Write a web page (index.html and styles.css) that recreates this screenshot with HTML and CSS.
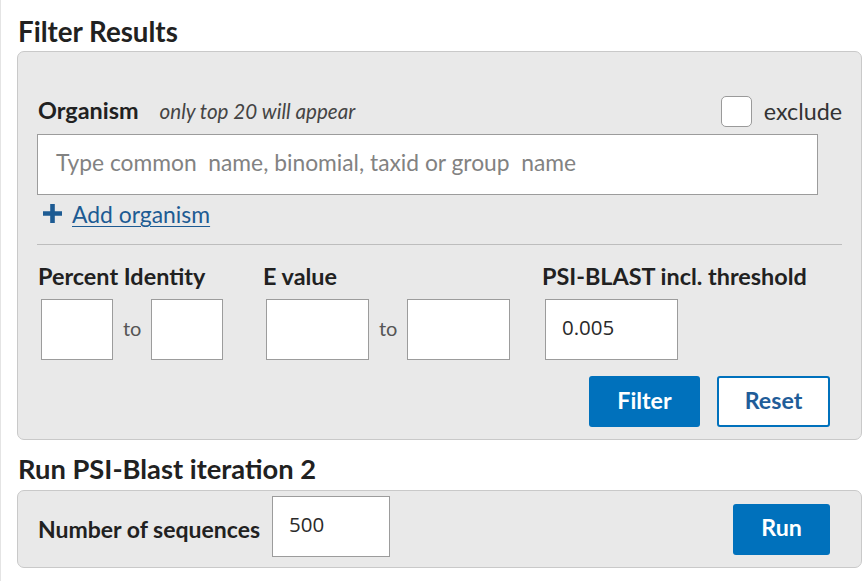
FILE: index.html
```html
<!DOCTYPE html>
<html>
<head>
<meta charset="utf-8">
<link rel="stylesheet" href="styles.css">
</head>
<body>
<div class="page">
  <h2 class="title">Filter Results</h2>
  <div class="panel filter-panel">
    <div class="org-row">
      <div class="org-label"><span class="lbl">Organism</span><span class="hint">only top 20 will appear</span></div>
      <label class="exclude"><span class="checkbox"></span><span>exclude</span></label>
    </div>
    <div class="text-input org-input"><span class="placeholder">Type common&nbsp; name, binomial, taxid or group&nbsp; name</span></div>
    <div class="add-row">
      <svg class="plus" width="21" height="21" viewBox="0 0 21 21"><path d="M10.5 1v19M1 10.5h19" stroke="#1d5b93" stroke-width="4.6" fill="none"/></svg>
      <a class="add-link" href="#">Add organism</a>
    </div>
    <div class="divider"></div>
    <div class="ranges">
      <div class="group">
        <div class="lbl">Percent Identity</div>
        <div class="inputs">
          <div class="box w72"></div><span class="to">to</span><div class="box w72"></div>
        </div>
      </div>
      <div class="group">
        <div class="lbl">E value</div>
        <div class="inputs">
          <div class="box w102"></div><span class="to">to</span><div class="box w102"></div>
        </div>
      </div>
      <div class="group">
        <div class="lbl">PSI-BLAST incl. threshold</div>
        <div class="inputs">
          <div class="box w132"><span class="val">0.005</span></div>
        </div>
      </div>
    </div>
    <div class="actions">
      <button class="btn primary filter">Filter</button>
      <button class="btn outline reset">Reset</button>
    </div>
  </div>
  <h2 class="title title2">Run PSI-Blast iteration 2</h2>
  <div class="panel run-panel">
    <span class="lbl">Number of sequences</span>
    <div class="box w117"><span class="val">500</span></div>
    <button class="btn primary run">Run</button>
  </div>
</div>
</body>
</html>
```
FILE: styles.css
```css
* { box-sizing: border-box; }
html, body { margin: 0; padding: 0; background: #fff; }
body {
  font-family: Lato, "Open Sans", sans-serif;
  color: #212121;
  width: 862px;
  height: 581px;
  overflow: hidden;
  border-left: 1px solid #e4e4e4;
}
.page { padding-left: 16px; width: 861px; }
.title {
  margin: 0;
  padding-top: 15px;
  font-size: 27.7px;
  font-weight: 700;
  line-height: 34px;
  height: 51px;
  padding-left: 1px;
  white-space: nowrap;
}
.panel {
  background: #e9e9e9;
  border: 1px solid #c9c9c9;
  border-radius: 7px;
}
.filter-panel {
  height: 389px;
  padding: 44px 19px 0 19px;
}
.org-row {
  display: flex;
  align-items: center;
  justify-content: space-between;
  height: 30px;
}
.org-label { margin-bottom: 2px; padding-left: 1px; white-space: nowrap; }
.lbl { font-size: 23.4px; font-weight: 700; white-space: nowrap; }
.hint { font-size: 20.6px; font-style: italic; color: #444; margin-left: 21px; }
.exclude { display: flex; align-items: center; font-size: 23.3px; color: #333; }
.checkbox {
  width: 31px; height: 31px;
  background: #fff;
  border: 1px solid #9a9a9a;
  border-radius: 5px;
  margin-right: 12px;
}
.text-input {
  margin-top: 8px;
  height: 61px;
  width: 781px;
  background: #fff;
  border: 1px solid #9c9c9c;
  display: flex;
  align-items: center;
  padding-left: 18px;
}
.placeholder { font-size: 22.8px; color: #828282; white-space: nowrap; margin-bottom: 5px; }
.add-row {
  display: flex;
  align-items: center;
  height: 30px;
  margin-top: 4px;
  padding-left: 5px;
}
.plus { margin-right: 9px; margin-top: -2px; }
.add-link { font-size: 22.9px; color: #1d5b93; text-decoration: underline; text-underline-offset: 3px; text-decoration-thickness: 1px; }
.divider {
  height: 1px;
  background: #bdbdbd;
  margin-top: 15px;
}
.ranges {
  display: grid;
  grid-template-columns: 225px 279px auto;
  margin-top: 19px;
}
.group { display: flex; flex-direction: column; }
.group .lbl { height: 35px; line-height: 24px; padding-left: 1px; }
.inputs { display: flex; align-items: center; padding-left: 4px; }
.box {
  height: 61px;
  background: #fff;
  border: 1px solid #9c9c9c;
  display: flex;
  align-items: center;
}
.w72 { width: 72px; }
.w102 { width: 103px; }
.w132 { width: 133px; }
.w117 { width: 118px; }
.to { font-size: 20px; color: #555; margin: 0 10px 4px; }
.val { font-family: "Open Sans", sans-serif; font-size: 20.5px; color: #2a2a2a; padding-left: 16px; margin-bottom: 5px; }
.actions {
  display: flex;
  justify-content: flex-end;
  gap: 17px;
  margin-top: 16px;
  padding-right: 12px;
}
.btn {
  font-family: Lato, "Open Sans", sans-serif;
  font-size: 23.2px;
  font-weight: 700;
  height: 51px;
  border-radius: 3px;
  cursor: pointer;
  padding: 0 0 4px;
}
.primary { background: #0071bc; color: #fff; border: none; }
.outline { background: #fff; color: #1f5d99; border: 2px solid #0071bc; }
.filter { width: 111px; }
.reset { width: 113px; }
.title2 { padding-top: 12px; height: 50px; font-size: 27.3px; }
.run-panel {
  height: 78px;
  display: flex;
  align-items: center;
  padding: 0 31px 0 20px;
}
.run-panel .lbl { margin-right: 12px; font-size: 23px; }
.run-panel .box { margin-top: -5px; }
.run { width: 97px; height: 51px; margin-left: auto; }
```
